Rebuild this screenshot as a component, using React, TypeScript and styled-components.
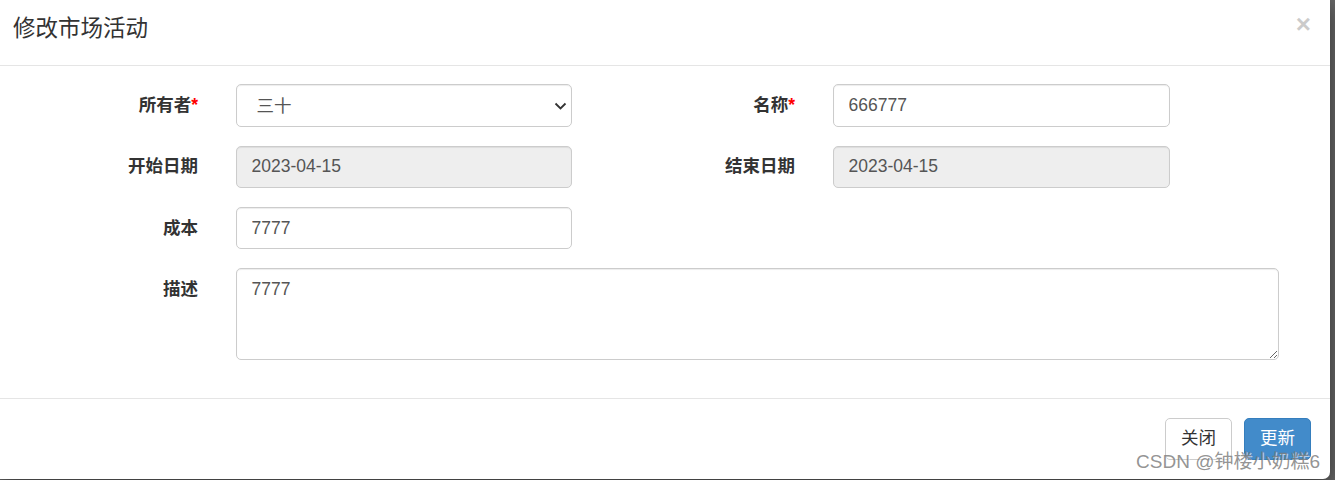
import React from 'react';
import styled, { createGlobalStyle } from 'styled-components';

const GlobalStyle = createGlobalStyle`
	html, body {
		margin: 0;
		padding: 0;
		background: #676767;
		height: 480px;
		overflow: hidden;
	}
	* {
		box-sizing: border-box;
	}
`;

const font = `"Liberation Sans", "Noto Sans CJK SC", sans-serif`;

const Modal = styled.div`
	position: relative;
	width: 1330px;
	height: 479px;
	background: #fff;
	border-bottom-right-radius: 7px;
	box-shadow: 0 6px 20px rgba(0, 0, 0, 0.5);
	font-family: ${font};
	color: #333;
	display: flex;
	flex-direction: column;
`;

const Header = styled.div`
	display: flex;
	justify-content: space-between;
	align-items: flex-start;
	height: 66px;
	padding: 13px 19px 0 13px;
	border-bottom: 1px solid #e5e5e5;
`;

const Title = styled.h4`
	margin: 0;
	font-size: 22.5px;
	line-height: 32px;
	font-weight: normal;
	color: #333;
`;

const Close = styled.button`
	border: 0;
	background: none;
	padding: 0;
	margin-top: -2px;
	font-family: ${font};
	font-size: 26px;
	font-weight: bold;
	line-height: 26px;
	color: #000;
	opacity: 0.2;
	cursor: pointer;
`;

const Body = styled.div`
	padding: 18.75px 0 37.5px;
	border-bottom: 1px solid #e5e5e5;
`;

const Form = styled.form`
	display: grid;
	grid-template-columns: 198px 336px 186px 337px 72px;
	column-gap: 37.5px;
	row-gap: 18.75px;
`;

const Label = styled.label`
	text-align: right;
	font-size: 17.5px;
	font-weight: bold;
	line-height: 25px;
	padding-top: 8.75px;
	color: #333;
`;

const Required = styled.span`
	color: red;
`;

const Input = styled.input<{ $readOnly?: boolean }>`
	width: 100%;
	height: 42.5px;
	padding: 7.5px 15px;
	font-family: ${font};
	font-size: 17.5px;
	line-height: 25px;
	color: #555;
	background: ${(p) => (p.$readOnly ? '#eee' : '#fff')};
	border: 1px solid #ccc;
	border-radius: 5px;
	box-shadow: inset 0 1px 1px rgba(0, 0, 0, 0.075);
	outline: none;
`;

const SelectWrap = styled.div`
	position: relative;
`;

const Select = styled.select`
	width: 100%;
	height: 42.5px;
	padding: 7.5px 15px 7.5px 20px;
	font-family: ${font};
	font-size: 17.5px;
	color: #555;
	background: #fff;
	border: 1px solid #ccc;
	border-radius: 5px;
	box-shadow: inset 0 1px 1px rgba(0, 0, 0, 0.075);
	appearance: none;
	outline: none;
`;

const Chevron = styled.svg`
	position: absolute;
	right: 5px;
	top: 18px;
	pointer-events: none;
`;

const TextArea = styled.textarea`
	grid-column: 2 / 6;
	height: 92px;
	padding: 7.5px 15px;
	font-family: ${font};
	font-size: 17.5px;
	line-height: 25px;
	color: #555;
	border: 1px solid #ccc;
	border-radius: 5px;
	box-shadow: inset 0 1px 1px rgba(0, 0, 0, 0.075);
	outline: none;
`;

const Footer = styled.div`
	display: flex;
	justify-content: flex-end;
	gap: 12px;
	padding: 19px 19px;
`;

const Button = styled.button<{ $primary?: boolean }>`
	height: 42.5px;
	padding: 7.5px 15px;
	font-family: ${font};
	font-size: 17.5px;
	line-height: 25px;
	border-radius: 5px;
	border: 1px solid ${(p) => (p.$primary ? '#357ebd' : '#ccc')};
	background: ${(p) => (p.$primary ? '#428bca' : '#fff')};
	color: ${(p) => (p.$primary ? '#fff' : '#333')};
	cursor: pointer;
`;

const Watermark = styled.div`
	position: absolute;
	right: 10px;
	bottom: 6px;
	font-family: ${font};
	font-size: 19px;
	color: rgba(120, 120, 120, 0.8);
	text-shadow: 1px 1px 0 rgba(255, 255, 255, 0.6);
	pointer-events: none;
	white-space: nowrap;
`;

export default function App() {
	return (
		<>
			<GlobalStyle />
			<Modal>
				<Header>
					<Title>修改市场活动</Title>
					<Close type="button">×</Close>
				</Header>
				<Body>
					<Form>
						<Label>
							所有者<Required>*</Required>
						</Label>
						<SelectWrap>
							<Select defaultValue="sanshi">
								<option value="sanshi">三十</option>
							</Select>
							<Chevron width="13" height="8" viewBox="0 0 13 8">
								<path d="M1.5 1.5 L6.5 6.5 L11.5 1.5" fill="none" stroke="#333" strokeWidth="1.8" />
							</Chevron>
						</SelectWrap>
						<Label>
							名称<Required>*</Required>
						</Label>
						<Input defaultValue="666777" />
						<span />

						<Label>开始日期</Label>
						<Input $readOnly readOnly defaultValue="2023-04-15" />
						<Label>结束日期</Label>
						<Input $readOnly readOnly defaultValue="2023-04-15" />
						<span />

						<Label>成本</Label>
						<Input defaultValue="7777" />
						<span />
						<span />
						<span />

						<Label>描述</Label>
						<TextArea defaultValue="7777" />
					</Form>
				</Body>
				<Footer>
					<Button type="button">关闭</Button>
					<Button type="button" $primary>
						更新
					</Button>
				</Footer>
				<Watermark>CSDN @钟楼小奶糕6</Watermark>
			</Modal>
		</>
	);
}
